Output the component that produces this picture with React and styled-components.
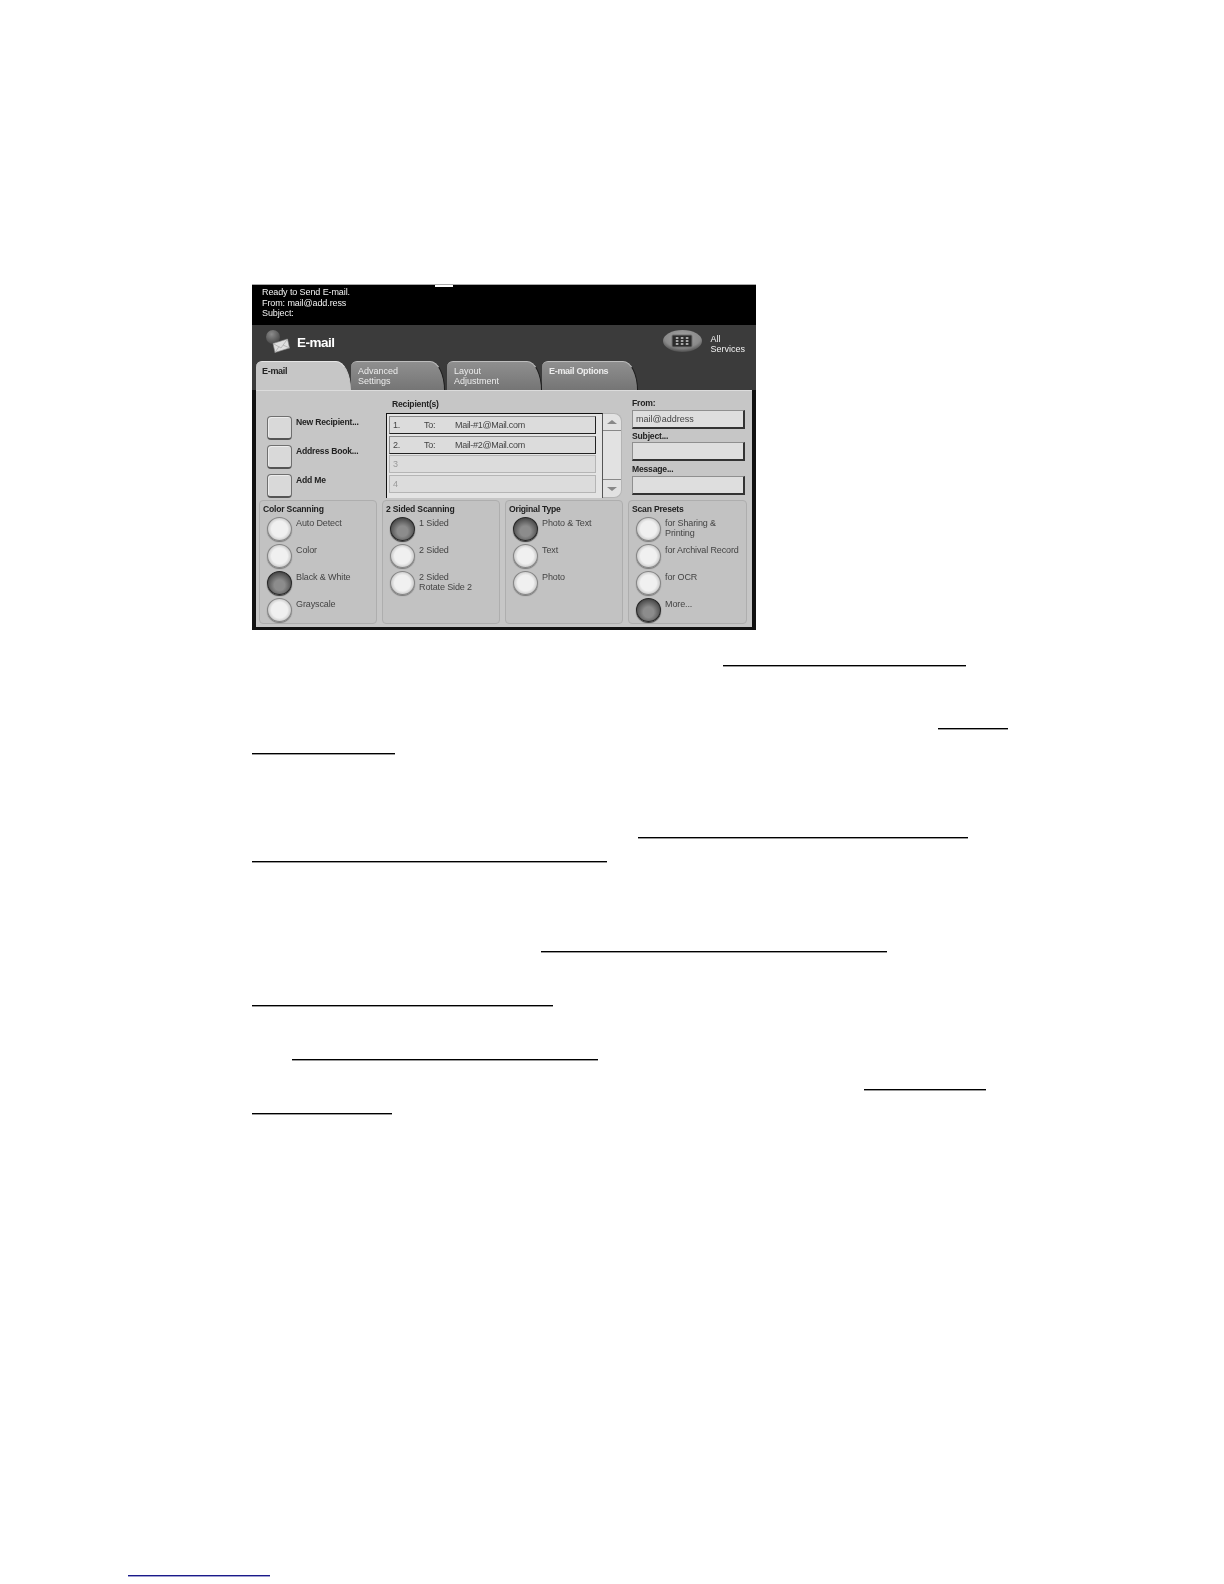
import React from 'react'
import styled, { createGlobalStyle } from 'styled-components'

const Global = createGlobalStyle`
  html, body {
    margin: 0;
    padding: 0;
    background: #fff;
    font-family: "Liberation Sans", Arial, sans-serif;
  }
`

const Page = styled.div`
  width: 1224px;
  height: 1584px;
  padding-top: 284px;
  box-sizing: border-box;
  overflow: hidden;
`

const Screen = styled.div`
  position: relative;
  width: 504px;
  height: 346px;
  margin-left: 252px;
  box-sizing: border-box;
  background: #111;
  border-top: 1px solid #aaa;
  filter: blur(0.3px);
  font-size: 9px;
  line-height: 10.3px;
`

const Notch = styled.div`
  position: absolute;
  left: 183px;
  top: 0;
  width: 18px;
  height: 2px;
  background: #fff;
`

const StatusBar = styled.div`
  height: 40px;
  padding: 2px 0 0 10px;
  box-sizing: border-box;
  background: #000;
  color: #f2f2f2;
  line-height: 10.5px;
  letter-spacing: -0.1px;
`

const Header = styled.div`
  height: 65px;
  background: #3b3b3b;
`

const TitleRow = styled.div`
  display: flex;
  align-items: flex-start;
  height: 36px;
  padding: 5px 0 0 14px;
  box-sizing: border-box;
`

const Title = styled.div`
  margin: 5px 0 0 7px;
  color: #fff;
  font-size: 13.5px;
  line-height: 16px;
  font-weight: bold;
  letter-spacing: -0.5px;
`

const AllServices = styled.div`
  display: flex;
  margin-left: auto;
  margin-right: 11px;
  gap: 8px;
  color: #f2f2f2;
`

const AllText = styled.div`
  padding-top: 4px;
`

const TabRow = styled.div`
  display: flex;
  height: 29px;
  padding-left: 4px;
`

const Tab = styled.div`
  width: ${p => p.$width}px;
  margin-left: ${p => p.$gap || 0}px;
  padding: 4px 0 0 ${p => (p.$active ? 6 : 7)}px;
  box-sizing: border-box;
  border-radius: 6px 15px 0 0 / 6px 29px 0 0;
  border-top: 1px solid ${p => (p.$active ? '#e6e6e6' : '#bdbdbd')};
  border-right: 1px solid ${p => (p.$active ? '#c6c6c6' : '#1c1c1c')};
  background: ${p => (p.$active ? '#c6c6c6' : 'linear-gradient(#8f8f8f, #757575)')};
  color: ${p => (p.$active ? '#222' : '#ececec')};
  font-weight: ${p => (p.$bold ? 'bold' : 'normal')};
  letter-spacing: ${p => (p.$bold ? '-0.3px' : '0')};
`

const Content = styled.div`
  width: 496px;
  height: 237px;
  margin-left: 4px;
  background: #c6c6c6;
  border-top: 1px solid #dcdcdc;
  box-sizing: border-box;
`

const TopRow = styled.div`
  display: flex;
  height: 109px;
  padding-left: 11px;
`

const ButtonColumn = styled.div`
  display: flex;
  flex-direction: column;
  gap: 5px;
  width: 119px;
  padding-top: 25px;
  box-sizing: border-box;
`

const SquareRow = styled.div`
  display: flex;
  gap: 4px;
  height: 24px;
`

const SquareButton = styled.div`
  width: 25px;
  height: 24px;
  box-sizing: border-box;
  border-radius: 4px;
  border: 1px solid #6f6f6f;
  border-bottom: 2px solid #555;
  background: #d9d9d9;
  box-shadow: inset 1px 1px 0 #ececec;
`

const BoldLabel = styled.div`
  padding-top: ${p => p.$top || 0}px;
  color: #222;
  font-weight: bold;
  font-size: 8.6px;
  letter-spacing: -0.2px;
`

const ListColumn = styled.div`
  width: 236px;
  margin-right: 10px;
  padding-top: 8px;
  box-sizing: border-box;
`

const ListTitle = styled(BoldLabel)`
  padding-left: 6px;
  height: 14px;
`

const ListFrame = styled.div`
  display: flex;
  height: 85px;
`

const List = styled.div`
  display: flex;
  flex-direction: column;
  gap: 1.7px;
  width: 217px;
  padding: 2px 6px 0 2px;
  box-sizing: border-box;
  border-top: 1px solid #111;
  border-left: 1px solid #111;
  border-right: 1px solid #555;
  background: #e4e4e4;
`

const Row = styled.div`
  display: flex;
  align-items: center;
  height: 18px;
  flex: none;
  padding-left: 3px;
  box-sizing: border-box;
  background: #dcdcdc;
  border: 1px solid ${p => (p.$filled ? '#8a8a8a' : '#b5b5b5')};
  border-right-color: ${p => (p.$filled ? '#222' : '#b5b5b5')};
  border-bottom-color: ${p => (p.$filled ? '#222' : '#b5b5b5')};
  color: ${p => (p.$filled ? '#444' : '#999')};
  letter-spacing: -0.3px;
`

const RowNumber = styled.span`
  width: 31px;
`

const RowTo = styled.span`
  width: 31px;
`

const Scroller = styled.div`
  display: flex;
  flex-direction: column;
  width: 19px;
  box-sizing: border-box;
  border: 1px solid #b4b4b4;
  border-left: none;
  border-radius: 0 8px 8px 0;
  background: #e2e2e2;
`

const ScrollEnd = styled.div`
  display: flex;
  align-items: center;
  justify-content: center;
  height: ${p => p.$height}px;
`

const Arrow = styled.div`
  width: 0;
  height: 0;
  border-left: 5px solid transparent;
  border-right: 5px solid transparent;
  border-bottom: ${p => (p.$down ? 'none' : '4px solid #888')};
  border-top: ${p => (p.$down ? '4px solid #888' : 'none')};
`

const ScrollTrack = styled.div`
  flex: 1;
  border-top: 1px solid #888;
  border-bottom: 1px solid #888;
`

const FieldColumn = styled.div`
  display: flex;
  flex-direction: column;
  width: 113px;
  padding-top: 7px;
  box-sizing: border-box;
`

const Field = styled.div`
  height: 19px;
  margin: ${p => p.$top}px 0 ${p => p.$bottom}px;
  padding: 3px 0 0 3px;
  box-sizing: border-box;
  background: #dedede;
  border: 1px solid #8f8f8f;
  border-right: 2px solid #333;
  border-bottom: 2px solid #333;
  color: #444;
`

const Groups = styled.div`
  display: grid;
  grid-template-columns: repeat(3, 118px) 119px;
  gap: 5px;
  height: 124px;
  margin-left: 3px;
`

const Group = styled.div`
  padding: 3px 0 0 3px;
  box-sizing: border-box;
  border: 1px solid #aeaeae;
  border-radius: 4px;
  background: #c2c2c2;
`

const GroupTitle = styled(BoldLabel)`
  height: 13px;
`

const OptionList = styled.div`
  display: flex;
  flex-direction: column;
  gap: 3px;
  margin-left: 4px;
`

const Option = styled.div`
  display: flex;
  gap: 4px;
  height: 24px;
`

const Radio = styled.div`
  flex: none;
  width: 25px;
  height: 24px;
  box-sizing: border-box;
  border-radius: 50%;
  border: 1px solid ${p => (p.$on ? '#262626' : '#858585')};
  box-shadow: 0 1px 1px ${p => (p.$on ? '#333' : '#777')};
  background: ${p => (p.$on
    ? 'radial-gradient(circle at 50% 60%, #8c8c8c 30%, #5c5c5c 62%, #2a2a2a 92%)'
    : 'radial-gradient(circle at 50% 50%, #f0f0f0 50%, #d2d2d2 68%, #9c9c9c 94%)')};
`

const OptionLabel = styled.div`
  padding-top: 1px;
  color: #444;
  letter-spacing: -0.12px;
`

const Rule = styled.div`
  height: 1px;
  width: ${p => p.$width}px;
  margin: ${p => p.$gap}px 0 0 ${p => p.$left}px;
  background: ${p => p.$color || '#000'};
  box-shadow: 0 1px 0 ${p => (p.$color ? '#a0a0d0' : '#9a9a9a')};
`

const EnvelopeIcon = () => (
  <svg width="24" height="23" viewBox="0 0 24 23">
    <defs>
      <radialGradient id="globe" cx="0.4" cy="0.3" r="0.8">
        <stop offset="0" stopColor="#8c8c8c" />
        <stop offset="1" stopColor="#3f3f3f" />
      </radialGradient>
    </defs>
    <circle cx="7" cy="7" r="7" fill="url(#globe)" />
    <path d="M7 13.5 L21.5 9 L23.5 18 L9 22.5 Z" fill="#dedede" stroke="#8a8a8a" strokeWidth="0.6" />
    <path d="M7 13.5 L15 18 L21.5 9 M9 22.5 L13 16.5 M23.5 18 L17 15" fill="none" stroke="#a6a6a6" strokeWidth="0.7" />
  </svg>
)

const AllServicesIcon = () => (
  <svg width="39" height="22" viewBox="0 0 39 22">
    <defs>
      <radialGradient id="pod" cx="0.5" cy="0.35" r="0.65">
        <stop offset="0" stopColor="#a4a4a4" />
        <stop offset="0.7" stopColor="#8a8a8a" />
        <stop offset="1" stopColor="#4f4f4f" />
      </radialGradient>
    </defs>
    <ellipse cx="19.5" cy="11" rx="19.5" ry="11" fill="url(#pod)" />
    <rect x="9" y="5" width="20" height="12" rx="1" fill="#2b2b2b" stroke="#707070" strokeWidth="1" />
    {[14, 19, 24].map(x => [8, 11, 14].map(y => (
      <rect key={x + '-' + y} x={x - 1.2} y={y - 1} width="2.6" height="2" fill="#a8a8a8" />
    )))}
  </svg>
)

const rows = [
  { n: '1.', to: 'To:', mail: 'Mail-#1@Mail.com' },
  { n: '2.', to: 'To:', mail: 'Mail-#2@Mail.com' },
  { n: '3' },
  { n: '4' },
]

const groups = [
  {
    title: 'Color Scanning',
    options: [
      { label: 'Auto Detect' },
      { label: 'Color' },
      { label: 'Black & White', on: true },
      { label: 'Grayscale' },
    ],
  },
  {
    title: '2 Sided Scanning',
    options: [
      { label: '1 Sided', on: true },
      { label: '2 Sided' },
      { label: ['2 Sided', 'Rotate Side 2'] },
    ],
  },
  {
    title: 'Original Type',
    options: [
      { label: 'Photo & Text', on: true },
      { label: 'Text' },
      { label: 'Photo' },
    ],
  },
  {
    title: 'Scan Presets',
    options: [
      { label: ['for Sharing &', 'Printing'] },
      { label: 'for Archival Record' },
      { label: 'for OCR' },
      { label: 'More...', on: true },
    ],
  },
]

// blank link underlines below the screenshot, top to bottom
const rules = [
  { left: 723, width: 243, gap: 35 },
  { left: 938, width: 70, gap: 62 },
  { left: 252, width: 143, gap: 24 },
  { left: 638, width: 330, gap: 83 },
  { left: 252, width: 355, gap: 23 },
  { left: 541, width: 346, gap: 89 },
  { left: 252, width: 301, gap: 53 },
  { left: 292, width: 306, gap: 53 },
  { left: 864, width: 122, gap: 29 },
  { left: 252, width: 140, gap: 23 },
  { left: 128, width: 142, gap: 461, color: '#1a1a8a' },
]

const lines = label => (Array.isArray(label) ? label : [label]).map(t => <div key={t}>{t}</div>)

function App() {
  return (
    <Page>
      <Global />
      <Screen>
        <Notch />
        <StatusBar>
          <div>Ready to Send E-mail.</div>
          <div>From: mail@add.ress</div>
          <div>Subject:</div>
        </StatusBar>
        <Header>
          <TitleRow>
            <EnvelopeIcon />
            <Title>E-mail</Title>
            <AllServices>
              <AllServicesIcon />
              <AllText>
                <div>All</div>
                <div>Services</div>
              </AllText>
            </AllServices>
          </TitleRow>
          <TabRow>
            <Tab $active $bold $width={95}>E-mail</Tab>
            <Tab $width={94}>Advanced<br />Settings</Tab>
            <Tab $width={95} $gap={2}>Layout<br />Adjustment</Tab>
            <Tab $width={96} $bold>E-mail Options</Tab>
          </TabRow>
        </Header>
        <Content>
          <TopRow>
            <ButtonColumn>
              {['New Recipient...', 'Address Book...', 'Add Me'].map(t => (
                <SquareRow key={t}>
                  <SquareButton />
                  <BoldLabel $top={1}>{t}</BoldLabel>
                </SquareRow>
              ))}
            </ButtonColumn>
            <ListColumn>
              <ListTitle>Recipient(s)</ListTitle>
              <ListFrame>
                <List>
                  {rows.map(r => (
                    <Row key={r.n} $filled={!!r.mail}>
                      <RowNumber>{r.n}</RowNumber>
                      <RowTo>{r.to}</RowTo>
                      <span>{r.mail}</span>
                    </Row>
                  ))}
                </List>
                <Scroller>
                  <ScrollEnd $height={16}><Arrow /></ScrollEnd>
                  <ScrollTrack />
                  <ScrollEnd $height={17}><Arrow $down /></ScrollEnd>
                </Scroller>
              </ListFrame>
            </ListColumn>
            <FieldColumn>
              <BoldLabel>From:</BoldLabel>
              <Field $top={2} $bottom={2}>mail@address</Field>
              <BoldLabel>Subject...</BoldLabel>
              <Field $top={0} $bottom={3} />
              <BoldLabel>Message...</BoldLabel>
              <Field $top={2} $bottom={0} />
            </FieldColumn>
          </TopRow>
          <Groups>
            {groups.map(g => (
              <Group key={g.title}>
                <GroupTitle>{g.title}</GroupTitle>
                <OptionList>
                  {g.options.map((o, i) => (
                    <Option key={i}>
                      <Radio $on={o.on} />
                      <OptionLabel>{lines(o.label)}</OptionLabel>
                    </Option>
                  ))}
                </OptionList>
              </Group>
            ))}
          </Groups>
        </Content>
      </Screen>
      {rules.map((r, i) => (
        <Rule key={i} $left={r.left} $width={r.width} $gap={r.gap} $color={r.color} />
      ))}
    </Page>
  )
}

export default App
